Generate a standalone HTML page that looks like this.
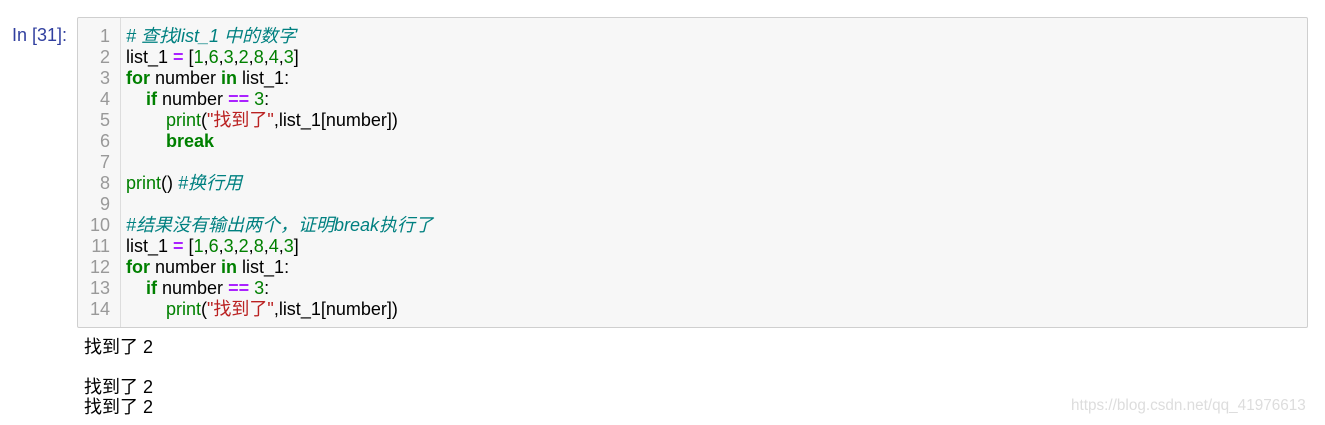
<!DOCTYPE html>
<html><head><meta charset="utf-8"><style>
body{margin:0;width:1325px;height:425px;background:#fff;position:relative;overflow:hidden;font-family:"Liberation Sans","Noto Sans CJK SC",sans-serif;}
.prompt{position:absolute;left:12px;top:25px;font-size:18px;color:#303f9f;}
.box{position:absolute;left:77px;top:17px;width:1229px;height:309px;background:#f7f7f7;border:1px solid #cfcfcf;border-radius:2px;}
.gut{position:absolute;left:0;top:0;width:42px;height:309px;border-right:1px solid #ddd;}
.code{position:absolute;left:48px;top:8px;font-size:18px;line-height:21px;color:#000;white-space:pre;}
.num{position:absolute;left:0;top:8px;width:32px;text-align:right;font-size:18px;line-height:21px;color:#999;white-space:pre;}
.c{color:#008080;font-style:italic}.k{color:#008000;font-weight:bold}.o{color:#aa22ff;font-weight:bold}.n{color:#008000}.s{color:#ba2121}.b{color:#008000}
.out{position:absolute;left:84px;top:337px;font-size:18px;line-height:20px;white-space:pre;color:#000;}
.wm{position:absolute;left:1071px;top:397px;font-size:15.3px;color:#ddd;}
</style></head><body>
<div class="prompt">In [31]:</div>
<div class="box"><div class="gut"><div class="num">1
2
3
4
5
6
7
8
9
10
11
12
13
14</div></div>
<div class="code"><span class="c"># 查找list_1 中的数字</span>
list_1 <span class="o">=</span> [<span class="n">1</span>,<span class="n">6</span>,<span class="n">3</span>,<span class="n">2</span>,<span class="n">8</span>,<span class="n">4</span>,<span class="n">3</span>]
<span class="k">for</span> number <span class="k">in</span> list_1:
    <span class="k">if</span> number <span class="o">==</span> <span class="n">3</span>:
        <span class="b">print</span>(<span class="s">"找到了"</span>,list_1[number])
        <span class="k">break</span>

<span class="b">print</span>() <span class="c">#换行用</span>

<span class="c">#结果没有输出两个，证明break执行了</span>
list_1 <span class="o">=</span> [<span class="n">1</span>,<span class="n">6</span>,<span class="n">3</span>,<span class="n">2</span>,<span class="n">8</span>,<span class="n">4</span>,<span class="n">3</span>]
<span class="k">for</span> number <span class="k">in</span> list_1:
    <span class="k">if</span> number <span class="o">==</span> <span class="n">3</span>:
        <span class="b">print</span>(<span class="s">"找到了"</span>,list_1[number])</div></div>
<div class="out">找到了 2

找到了 2
找到了 2</div>
<div class="wm">https://blog.csdn.net/qq_41976613</div>
</body></html>
